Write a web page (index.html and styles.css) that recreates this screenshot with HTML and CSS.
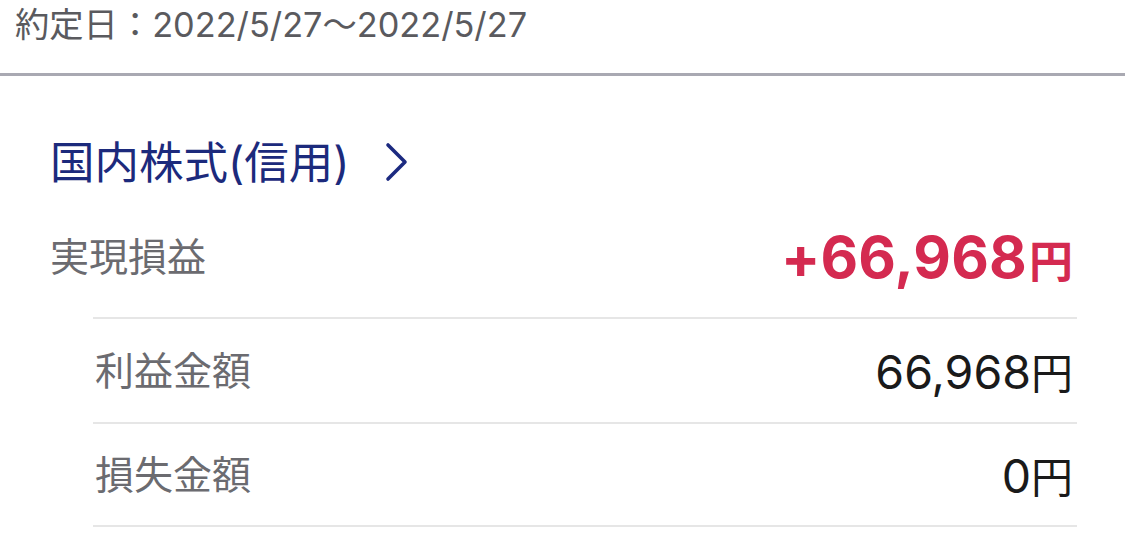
FILE: index.html
```html
<!DOCTYPE html>
<html lang="ja">
<head>
<meta charset="utf-8">
<link rel="stylesheet" href="styles.css">
</head>
<body>
<div class="header"><span class="date">約定日：2022/5/27～2022/5/27</span></div>
<div class="section">
  <div class="title-row">
    <span class="title">国内株式(信用)</span>
    <svg class="chev" width="24" height="40" viewBox="0 0 24 40"><path d="M3 3 L20 20 L3 37" fill="none" stroke="#1c2a80" stroke-width="3.6" stroke-linecap="round" stroke-linejoin="round"/></svg>
  </div>
  <div class="main-row">
    <span class="label">実現損益</span>
    <span class="big"><span class="num">+66,968</span><span class="yen">円</span></span>
  </div>
  <div class="sub-row">
    <span class="label">利益金額</span>
    <span class="val"><span class="num">66,968</span><span class="yen-r">円</span></span>
  </div>
  <div class="sub-row">
    <span class="label">損失金額</span>
    <span class="val"><span class="num">0</span><span class="yen-r">円</span></span>
  </div>
</div>
</body>
</html>
```
FILE: styles.css
```css
html, body {
  margin: 0;
  padding: 0;
  background: #ffffff;
}
body {
  font-family: Inter, "Noto Sans CJK JP", sans-serif;
  width: 1125px;
  height: 552px;
  overflow: hidden;
}
.header {
  height: 73px;
  padding-left: 15px;
  border-bottom: 3px solid #a9a9b2;
  display: flex;
  align-items: flex-start;
}
.date {
  font-size: 34.3px;
  line-height: 50px;
  color: #5a5a5e;
}
.section {
  padding: 0 48px 0 50px;
}
.title-row {
  margin-top: 57px;
  height: 60px;
  display: flex;
  align-items: center;
}
.title {
  font-size: 44.5px;
  line-height: 60px;
  color: #1c2a7c;
}
.chev {
  margin-left: 36px;
  margin-top: -2px;
}
.main-row {
  height: 124px;
  box-sizing: border-box;
  padding: 4px 4px 0 0;
  display: flex;
  align-items: center;
  justify-content: space-between;
}
.label {
  font-size: 39px;
  color: #6b6b70;
  line-height: 50px;
}
.big {
  color: #d42a50;
  font-weight: 700;
  display: flex;
  align-items: baseline;
}
.big .num {
  font-size: 58px;
  letter-spacing: 0.2px;
}
.big .yen {
  font-size: 44px;
  margin-left: 2px;
}
.sub-row {
  margin-left: 43px;
  height: 105px;
  box-sizing: border-box;
  border-top: 2px solid #e6e6e6;
  padding: 0 4px 0 2px;
  display: flex;
  align-items: center;
  justify-content: space-between;
}
.val {
  color: #1a1a1a;
  display: flex;
  align-items: baseline;
}
.val .num {
  font-size: 46.5px;
}
.val .yen-r {
  font-size: 42px;
}
.sub-row:last-child {
  border-bottom: 2px solid #e6e6e6;
}
```
